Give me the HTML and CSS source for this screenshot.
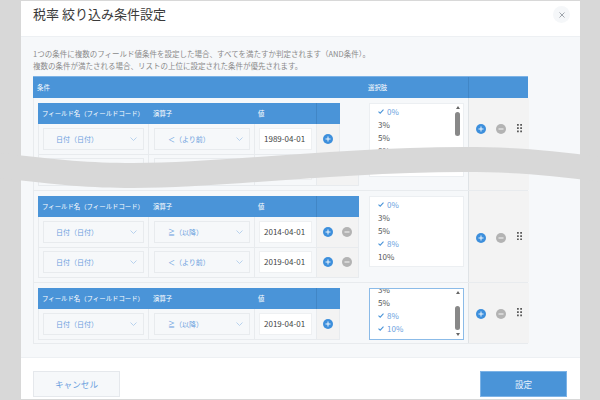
FILE: index.html
```html
<!DOCTYPE html>
<html lang="ja">
<head>
    <meta charset="UTF-8">
    <meta name="viewport" content="width=device-width, initial-scale=1.0">
    <title>税率 絞り込み条件設定</title>
    <link rel="stylesheet" href="styles.css">
</head>
<body>

    <!-- Shared icons -->
    <svg class="icon-defs" width="0" height="0">
        <symbol id="i-chevron" viewBox="0 0 7 4"><path d="M.5.5 3.5 3.5 6.500.5" fill="none" stroke="#a8c8ea" stroke-width=".8"/></symbol>
        <symbol id="i-check" viewBox="0 0 6 5"><path d="M.5 2.600 2.200 4.200 5.500.7" fill="none" stroke="#4a94d8" stroke-width="1.100"/></symbol>
        <symbol id="i-plus" viewBox="0 0 10 10"><circle cx="5" cy="5" r="5" fill="#3d8fdc"/><path d="M5 2.500v5M2.500 5h5" stroke="#fff" stroke-width=".9"/></symbol>
        <symbol id="i-minus" viewBox="0 0 10 10"><circle cx="5" cy="5" r="5" fill="#b3b3b3"/><path d="M2.500 5h5" stroke="#fff" stroke-width=".9"/></symbol>
        <symbol id="i-drag" viewBox="0 0 5 8.500"><path d="M0 0h1.800v1.800H0zM3.200 0H5v1.800H3.200zM0 3.300h1.800v1.800H0zM3.200 3.300H5v1.800H3.200zM0 6.600h1.800v1.800H0zM3.200 6.600H5v1.800H3.200z" fill="#5a5a5a"/></symbol>
    </svg>

    <div class="modal">
        <div class="modal-header">
            <h1 class="modal-title">税率 絞り込み条件設定</h1>
            <div class="close-btn">
                <svg width="6" height="6" viewBox="0 0 6 6"><path d="M.5.5l5 5M5.500.5l-5 5" stroke="#8a9199" stroke-width=".8"/></svg>
            </div>
        </div>

        <div class="modal-body">
            <p class="desc">1つの条件に複数のフィールド値条件を設定した場合、すべてを満たすか判定されます（AND条件）。<br>複数の条件が満たされる場合、リストの上位に設定された条件が優先されます。</p>

            <div class="rule-table">
                <div class="rule-head">
                    <div class="head-cond">条件</div>
                    <div class="head-opt">選択肢</div>
                    <div class="head-act"></div>
                </div>

                <!-- Row 1 -->
                <div class="rule-row row-first">
                    <div class="cond-col">
                        <div class="cond-table">
                            <div class="cond-head">
                                <div>フィールド名（フィールドコード）</div>
                                <div class="head-op">演算子</div>
                                <div>値</div>
                                <div class="head-btn"></div>
                            </div>
                            <div class="cond-line">
                                <div class="cell"><div class="select field-select"><span>日付（日付）</span><svg class="chevron"><use href="#i-chevron"/></svg></div></div>
                                <div class="cell cell-op"><div class="select op-select"><span>＜（より前）</span><svg class="chevron"><use href="#i-chevron"/></svg></div></div>
                                <div class="cell"><div class="value">1989-04-01</div></div>
                                <div class="btn-cell"><svg class="round"><use href="#i-plus"/></svg></div>
                            </div>
                        </div>
                        <div class="cond-table cond-wide cond-tail">
                            <div class="cond-line">
                                <div class="cell"><div class="select field-select"></div></div>
                                <div class="cell cell-op"><div class="select op-select"></div></div>
                                <div class="cell"><div class="value"></div></div>
                                <div class="btn-cell"></div>
                            </div>
                        </div>
                    </div>
                    <div class="opt-col">
                        <div class="opt-list opt-first">
                            <div class="opt-items">
                                <div class="opt on"><svg class="check"><use href="#i-check"/></svg>0%</div>
                                <div class="opt">3%</div>
                                <div class="opt">5%</div>
                                <div class="opt">8%</div>
                            </div>
                            <div class="scrollbar">
                                <span class="arrow-up"></span>
                                <span class="thumb"></span>
                            </div>
                        </div>
                    </div>
                    <div class="act-col">
                        <svg class="round"><use href="#i-plus"/></svg>
                        <svg class="round"><use href="#i-minus"/></svg>
                        <svg class="drag"><use href="#i-drag"/></svg>
                    </div>
                </div>

                <!-- Row 2 -->
                <div class="rule-row row-second">
                    <div class="cond-col">
                        <div class="cond-table cond-wide">
                            <div class="cond-head">
                                <div>フィールド名（フィールドコード）</div>
                                <div class="head-op">演算子</div>
                                <div>値</div>
                                <div class="head-btn"></div>
                            </div>
                            <div class="cond-line">
                                <div class="cell"><div class="select field-select"><span>日付（日付）</span><svg class="chevron"><use href="#i-chevron"/></svg></div></div>
                                <div class="cell cell-op"><div class="select op-select"><span>≧（以降）</span><svg class="chevron"><use href="#i-chevron"/></svg></div></div>
                                <div class="cell"><div class="value">2014-04-01</div></div>
                                <div class="btn-cell"><svg class="round"><use href="#i-plus"/></svg><svg class="round"><use href="#i-minus"/></svg></div>
                            </div>
                            <div class="cond-line">
                                <div class="cell"><div class="select field-select"><span>日付（日付）</span><svg class="chevron"><use href="#i-chevron"/></svg></div></div>
                                <div class="cell cell-op"><div class="select op-select"><span>＜（より前）</span><svg class="chevron"><use href="#i-chevron"/></svg></div></div>
                                <div class="cell"><div class="value">2019-04-01</div></div>
                                <div class="btn-cell"><svg class="round"><use href="#i-plus"/></svg><svg class="round"><use href="#i-minus"/></svg></div>
                            </div>
                        </div>
                    </div>
                    <div class="opt-col">
                        <div class="opt-list opt-second">
                            <div class="opt-items">
                                <div class="opt on"><svg class="check"><use href="#i-check"/></svg>0%</div>
                                <div class="opt">3%</div>
                                <div class="opt">5%</div>
                                <div class="opt on"><svg class="check"><use href="#i-check"/></svg>8%</div>
                                <div class="opt">10%</div>
                            </div>
                        </div>
                    </div>
                    <div class="act-col">
                        <svg class="round"><use href="#i-plus"/></svg>
                        <svg class="round"><use href="#i-minus"/></svg>
                        <svg class="drag"><use href="#i-drag"/></svg>
                    </div>
                </div>

                <!-- Row 3 -->
                <div class="rule-row row-third">
                    <div class="cond-col">
                        <div class="cond-table">
                            <div class="cond-head">
                                <div>フィールド名（フィールドコード）</div>
                                <div class="head-op">演算子</div>
                                <div>値</div>
                                <div class="head-btn"></div>
                            </div>
                            <div class="cond-line">
                                <div class="cell"><div class="select field-select"><span>日付（日付）</span><svg class="chevron"><use href="#i-chevron"/></svg></div></div>
                                <div class="cell cell-op"><div class="select op-select"><span>≧（以降）</span><svg class="chevron"><use href="#i-chevron"/></svg></div></div>
                                <div class="cell"><div class="value">2019-04-01</div></div>
                                <div class="btn-cell"><svg class="round"><use href="#i-plus"/></svg></div>
                            </div>
                        </div>
                    </div>
                    <div class="opt-col">
                        <div class="opt-list opt-focus">
                            <div class="opt-items">
                                <div class="opt">3%</div>
                                <div class="opt">5%</div>
                                <div class="opt on"><svg class="check"><use href="#i-check"/></svg>8%</div>
                                <div class="opt on"><svg class="check"><use href="#i-check"/></svg>10%</div>
                            </div>
                            <div class="scrollbar">
                                <span class="arrow-up"></span>
                                <span class="thumb"></span>
                                <span class="arrow-down"></span>
                            </div>
                        </div>
                    </div>
                    <div class="act-col">
                        <svg class="round"><use href="#i-plus"/></svg>
                        <svg class="round"><use href="#i-minus"/></svg>
                        <svg class="drag"><use href="#i-drag"/></svg>
                    </div>
                </div>
            </div>
        </div>

        <div class="modal-footer">
            <button class="btn btn-cancel">キャンセル</button>
            <button class="btn btn-submit">設定</button>
        </div>
    </div>

    <!-- Torn edge across the screenshot -->
    <svg class="tear" viewBox="0 0 600 400">
        <path d="M0 153C60 160 90 163 133 163 220 163 340 147 465 147 510 147 550 150 600 157V182C550 175 510 172 465 172 340 172 220 188 133 188 90 188 60 185 0 178Z" fill="#d8d8d8"/>
    </svg>

</body>
</html>
```

FILE: styles.css
```css
* {
    box-sizing: border-box;
}
body {
    margin: 0;
    width: 600px;
    height: 400px;
    overflow: hidden;
    position: relative;
    background: #d8d8d8;
    font-family: "Noto Sans CJK JP", "Noto Sans", sans-serif;
}
.icon-defs {
    position: absolute;
}
.modal {
    width: 559px;
    height: 398px;
    margin: 1px 0 0 21px;
    background: #fff;
    display: flex;
    flex-direction: column;
}
.modal-header {
    height: 36px;
    flex: none;
    padding: 2px 10px 0 12px;
    display: flex;
    justify-content: space-between;
    border-bottom: 1px solid #edf0f3;
}
.modal-title {
    margin: 0;
    font-size: 13px;
    font-weight: 400;
    line-height: 22px;
    color: #3a3a3a;
}
.close-btn {
    width: 17px;
    height: 17px;
    margin-top: 3px;
    border-radius: 50%;
    background: #f5f7f9;
    display: flex;
    align-items: center;
    justify-content: center;
}
.modal-body {
    height: 321px;
    flex: none;
    padding: 11px 12px 0;
    background: #f6f8fa;
    border-bottom: 1px solid #edf0f3;
}
.desc {
    margin: 0 0 5px;
    font-size: 7.500px;
    line-height: 11.500px;
    color: #8a8a8a;
}
.rule-table {
    width: 495px;
}
.rule-head {
    display: grid;
    grid-template-columns: 330px 105px 60px;
    height: 22px;
    background: #4a94d8;
    border-top: 1px solid #7db3e6;
    color: #fff;
    font-size: 6.400px;
    line-height: 21px;
}
.head-cond {
    padding-left: 4px;
}
.head-opt {
    padding-left: 5px;
}
.head-act {
    border-left: 1px solid #4186c6;
}
.rule-row {
    display: grid;
    grid-template-columns: 330px 105px 60px;
    border: 1px solid #e8ebee;
    border-top: 0;
}
.row-first {
    height: 93px;
}
.row-second {
    height: 92px;
}
.row-third {
    height: 61px;
}
.cond-col {
    padding: 4.500px 0 0 4px;
}
.cond-table {
    width: 302px;
}
.cond-wide {
    width: 321px;
}
.cond-tail {
    height: 31.500px;
}
.cond-head {
    display: grid;
    grid-template-columns: 110px 106px 62px 1fr;
    height: 21.500px;
    background: #4a94d8;
    color: #fff;
    font-size: 6.400px;
    line-height: 21px;
}
.cond-head > div {
    padding-left: 4px;
}
.cond-head .head-op {
    padding-left: 5px;
}
.cond-head .head-btn {
    border-left: 1px solid #4186c6;
}
.cond-line {
    display: grid;
    grid-template-columns: 110px 106px 62px 1fr;
    height: 30.500px;
    border: 1px solid #e8ebee;
    border-top: 0;
}
.cond-tail .cond-line {
    height: 31.500px;
}
.cell {
    padding: 3.500px 4px 0 4px;
    border-right: 1px solid #e8ebee;
}
.cell-op {
    padding-left: 5px;
}
.select {
    height: 22px;
    border: 1px solid #e8ebee;
    display: flex;
    align-items: center;
    justify-content: space-between;
    font-size: 7px;
    color: #6aa0de;
}
.field-select {
    padding: 0 6px 0 12px;
}
.op-select {
    padding: 0 6px 0 13px;
}
.chevron {
    width: 7px;
    height: 4px;
}
.value {
    height: 22px;
    padding-left: 4px;
    background: #fff;
    border: 1px solid #eef0f2;
    font-size: 8px;
    line-height: 20px;
    color: #444;
}
.btn-cell {
    background: #f3f3f3;
    display: flex;
    align-items: center;
    gap: 9px;
    padding-left: 6px;
}
.round {
    width: 10px;
    height: 10px;
    flex: none;
}
.opt-col {
    padding: 4.500px 4px 0 5px;
    border-right: 1px solid #dfe3e6;
}
.opt-list {
    display: flex;
    background: #fff;
    border: 1px solid #eceff2;
    overflow: hidden;
}
.opt-first {
    height: 74px;
}
.opt-second {
    height: 71px;
}
.opt-focus {
    height: 52px;
    border-color: #8bbbe8;
}
.opt-items {
    flex: 1;
    padding: 1px 0 0 8px;
}
.opt-focus .opt-items {
    margin-top: -7px;
}
.opt {
    height: 13px;
    font-size: 8px;
    line-height: 13px;
    color: #555;
    display: flex;
    align-items: center;
    gap: 3px;
}
.opt.on {
    color: #6aa0de;
}
.check {
    width: 6px;
    height: 5px;
}
.scrollbar {
    width: 9px;
    margin-right: 1px;
    flex: none;
    display: flex;
    flex-direction: column;
    align-items: center;
    padding-top: 2.500px;
}
.arrow-up {
    border: 2.500px solid transparent;
    border-top: 0;
    border-bottom: 3px solid #666;
}
.arrow-down {
    margin-top: 3px;
    border: 2.500px solid transparent;
    border-bottom: 0;
    border-top: 3px solid #666;
}
.thumb {
    width: 5px;
    height: 24px;
    margin-top: 3px;
    border-radius: 2.500px;
    background: #888;
}
.opt-focus .thumb {
    margin-top: 12px;
}
.act-col {
    background: #f3f3f3;
    display: flex;
    align-items: center;
    padding: 2px 0 0 7px;
    gap: 9.500px;
}
.row-first .act-col {
    align-items: flex-start;
    padding-top: 26px;
}
.drag {
    width: 5px;
    height: 8.500px;
    margin: -3px 0 0 1.500px;
}
.row-first .drag {
    margin-top: 0;
}
.modal-footer {
    flex: 1;
    display: flex;
    justify-content: space-between;
    padding: 13px 13px 0 12px;
}
.btn {
    width: 87px;
    height: 26px;
    font-family: inherit;
    font-size: 8.600px;
    padding: 0;
}
.btn-cancel {
    background: #f6f8fa;
    border: 1px solid #e5e8ec;
    color: #6aa0de;
}
.btn-submit {
    background: #4a94d8;
    border: 1px solid #7db3e6;
    color: #e8f1fb;
}
.tear {
    position: absolute;
    top: 0;
    left: 0;
    width: 600px;
    height: 400px;
}
```
